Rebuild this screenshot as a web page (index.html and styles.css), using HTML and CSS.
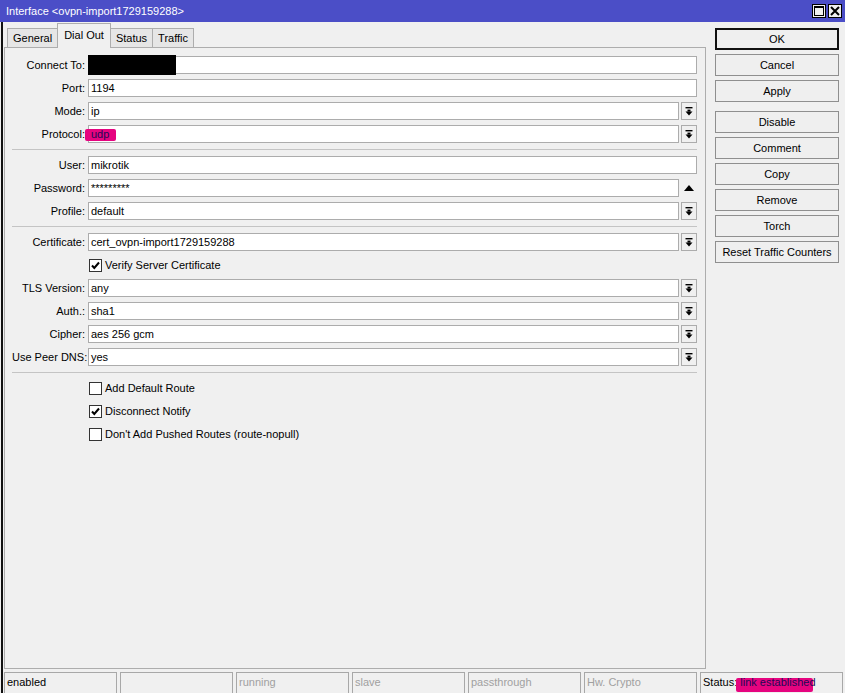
FILE: index.html
```html
<!DOCTYPE html>
<html>
<head>
<meta charset="utf-8">
<title>Interface</title>
<link rel="stylesheet" href="styles.css">
</head>
<body>
<div class="window">
  <div class="titlebar">
    <span class="title">Interface &lt;ovpn-import1729159288&gt;</span>
    <div class="tb-buttons">
      <span class="tb-btn"><svg width="12" height="12" viewBox="0 0 12 12"><rect x="1.5" y="1.5" width="9" height="9" fill="none" stroke="#000" stroke-width="1"/><rect x="1" y="1" width="10" height="2" fill="#000"/></svg></span>
      <span class="tb-btn"><svg width="12" height="12" viewBox="0 0 12 12"><path d="M2 2 L10 10 M10 2 L2 10" stroke="#000" stroke-width="2"/></svg></span>
    </div>
  </div>
  <div class="frame">
    <div class="content">
      <div class="left">
        <div class="tabs">
          <span class="tab">General</span>
          <span class="tab active">Dial Out</span>
          <span class="tab">Status</span>
          <span class="tab">Traffic</span>
        </div>
        <div class="panel">
          <div class="form">
            <div class="row"><label class="lbl">Connect To:</label><div class="field"><span class="input"></span><span class="redact"></span></div></div>
            <div class="row"><label class="lbl">Port:</label><div class="field"><span class="input">1194</span></div></div>
            <div class="row"><label class="lbl">Mode:</label><div class="field"><span class="input">ip</span><span class="dd"><svg width="8" height="9" viewBox="0 0 8 9"><rect x="0.5" y="0" width="7" height="1.4" fill="#000"/><rect x="2.5" y="2.6" width="3" height="2" fill="#000"/><path d="M0.5 4.4 L7.5 4.4 L4 8.4 Z" fill="#000"/></svg></span></div></div>
            <div class="row"><label class="lbl">Protocol:</label><div class="field"><span class="input hl-wrap"><span class="hl hl-udp"></span><span class="hl-text">udp</span></span><span class="dd"><svg width="8" height="9" viewBox="0 0 8 9"><rect x="0.5" y="0" width="7" height="1.4" fill="#000"/><rect x="2.5" y="2.6" width="3" height="2" fill="#000"/><path d="M0.5 4.4 L7.5 4.4 L4 8.4 Z" fill="#000"/></svg></span></div></div>
            <div class="sep"></div>
            <div class="row"><label class="lbl">User:</label><div class="field"><span class="input">mikrotik</span></div></div>
            <div class="row"><label class="lbl">Password:</label><div class="field"><span class="input">*********</span><span class="up"><svg width="10" height="6" viewBox="0 0 10 6"><path d="M0 6 L10 6 L5 0 Z" fill="#000"/></svg></span></div></div>
            <div class="row"><label class="lbl">Profile:</label><div class="field"><span class="input">default</span><span class="dd"><svg width="8" height="9" viewBox="0 0 8 9"><rect x="0.5" y="0" width="7" height="1.4" fill="#000"/><rect x="2.5" y="2.6" width="3" height="2" fill="#000"/><path d="M0.5 4.4 L7.5 4.4 L4 8.4 Z" fill="#000"/></svg></span></div></div>
            <div class="sep"></div>
            <div class="row"><label class="lbl">Certificate:</label><div class="field"><span class="input">cert_ovpn-import1729159288</span><span class="dd"><svg width="8" height="9" viewBox="0 0 8 9"><rect x="0.5" y="0" width="7" height="1.4" fill="#000"/><rect x="2.5" y="2.6" width="3" height="2" fill="#000"/><path d="M0.5 4.4 L7.5 4.4 L4 8.4 Z" fill="#000"/></svg></span></div></div>
            <div class="row"><span class="lbl"></span><div class="check"><span class="box"><svg width="11" height="11" viewBox="0 0 11 11"><path d="M2 5.5 L4.3 8 L9 2.5" fill="none" stroke="#000" stroke-width="2"/></svg></span><span>Verify Server Certificate</span></div></div>
            <div class="row"><label class="lbl">TLS Version:</label><div class="field"><span class="input">any</span><span class="dd"><svg width="8" height="9" viewBox="0 0 8 9"><rect x="0.5" y="0" width="7" height="1.4" fill="#000"/><rect x="2.5" y="2.6" width="3" height="2" fill="#000"/><path d="M0.5 4.4 L7.5 4.4 L4 8.4 Z" fill="#000"/></svg></span></div></div>
            <div class="row"><label class="lbl">Auth.:</label><div class="field"><span class="input">sha1</span><span class="dd"><svg width="8" height="9" viewBox="0 0 8 9"><rect x="0.5" y="0" width="7" height="1.4" fill="#000"/><rect x="2.5" y="2.6" width="3" height="2" fill="#000"/><path d="M0.5 4.4 L7.5 4.4 L4 8.4 Z" fill="#000"/></svg></span></div></div>
            <div class="row"><label class="lbl">Cipher:</label><div class="field"><span class="input">aes 256 gcm</span><span class="dd"><svg width="8" height="9" viewBox="0 0 8 9"><rect x="0.5" y="0" width="7" height="1.4" fill="#000"/><rect x="2.5" y="2.6" width="3" height="2" fill="#000"/><path d="M0.5 4.4 L7.5 4.4 L4 8.4 Z" fill="#000"/></svg></span></div></div>
            <div class="row"><label class="lbl">Use Peer DNS:</label><div class="field"><span class="input">yes</span><span class="dd"><svg width="8" height="9" viewBox="0 0 8 9"><rect x="0.5" y="0" width="7" height="1.4" fill="#000"/><rect x="2.5" y="2.6" width="3" height="2" fill="#000"/><path d="M0.5 4.4 L7.5 4.4 L4 8.4 Z" fill="#000"/></svg></span></div></div>
            <div class="sep"></div>
            <div class="row"><span class="lbl"></span><div class="check"><span class="box"></span><span>Add Default Route</span></div></div>
            <div class="row"><span class="lbl"></span><div class="check"><span class="box"><svg width="11" height="11" viewBox="0 0 11 11"><path d="M2 5.5 L4.3 8 L9 2.5" fill="none" stroke="#000" stroke-width="2"/></svg></span><span>Disconnect Notify</span></div></div>
            <div class="row"><span class="lbl"></span><div class="check"><span class="box"></span><span>Don't Add Pushed Routes (route-nopull)</span></div></div>
          </div>
        </div>
      </div>
      <div class="right">
        <button class="btn default">OK</button>
        <button class="btn">Cancel</button>
        <button class="btn">Apply</button>
        <button class="btn gap">Disable</button>
        <button class="btn">Comment</button>
        <button class="btn">Copy</button>
        <button class="btn">Remove</button>
        <button class="btn">Torch</button>
        <button class="btn">Reset Traffic Counters</button>
      </div>
    </div>
    <div class="statusbar">
      <span class="cell">enabled</span>
      <span class="cell"></span>
      <span class="cell dim">running</span>
      <span class="cell dim">slave</span>
      <span class="cell dim">passthrough</span>
      <span class="cell dim">Hw. Crypto</span>
      <span class="cell last">Status:<span class="hl-wrap st"><span class="hl hl-st"></span><span class="hl-text"> link established</span></span></span>
    </div>
  </div>
</div>
</body>
</html>
```

FILE: styles.css
```css
* { box-sizing: border-box; }
html, body { margin: 0; padding: 0; }
body {
  background: #f0f0f0;
  font-family: "Liberation Sans", Arial, sans-serif;
  font-size: 11px;
  color: #000;
}
.window {
  width: 845px;
  height: 693px;
  overflow: hidden;
  display: flex;
  flex-direction: column;
}
.titlebar {
  height: 22px;
  background: #4b4ec7;
  color: #fff;
  display: flex;
  align-items: center;
  justify-content: space-between;
  padding: 0 3px 0 6px;
  flex: none;
}
.title { font-size: 11px; line-height: 14px; }
.tb-buttons { display: flex; gap: 2px; margin-top: -1px; }
.tb-btn {
  width: 14px;
  height: 14px;
  background: #f0f0f0;
  border: 1px solid #000;
  display: flex;
  align-items: center;
  justify-content: center;
}
.frame {
  flex: 1;
  margin-left: 1px;
  border-left: 2px solid #111;
  display: flex;
  flex-direction: column;
}
.content {
  height: 650px;
  display: flex;
  flex: none;
}
.left {
  width: 702px;
  margin-left: 1px;
  display: flex;
  flex-direction: column;
}
.tabs {
  height: 25px;
  display: flex;
  align-items: flex-end;
  padding-left: 3px;
  position: relative;
  z-index: 1;
}
.tab {
  height: 19px;
  padding: 0 5px;
  line-height: 19px;
  font-size: 11px;
  background: #e6e6e6;
  border: 1px solid #adadad;
  border-bottom: none;
  margin-right: -1px;
}
.tab.active {
  height: 25px;
  line-height: 23px;
  background: #f0f0f0;
  margin-bottom: -1px;
  padding: 0 6px;
  position: relative;
}
.panel {
  height: 622px;
  border: 1px solid #adadad;
  background: #f0f0f0;
  padding: 8px 8px 0 7px;
}
.form {
  display: flex;
  flex-direction: column;
  gap: 5px;
}
.row {
  display: grid;
  grid-template-columns: 73px 1fr;
  column-gap: 3px;
  height: 18px;
}
.lbl {
  text-align: right;
  line-height: 18px;
  white-space: nowrap;
}
.field {
  display: flex;
  gap: 2px;
  height: 18px;
  position: relative;
}
.input {
  flex: 1;
  height: 18px;
  background: #fff;
  border: 1px solid #acacac;
  padding-left: 2px;
  line-height: 16px;
  white-space: nowrap;
}
.dd {
  width: 16px;
  height: 18px;
  border: 1px solid #acacac;
  background: #f0f0f0;
  display: flex;
  align-items: center;
  justify-content: center;
  flex: none;
}
.up {
  width: 16px;
  height: 18px;
  display: flex;
  align-items: center;
  justify-content: center;
  flex: none;
}
.redact {
  position: absolute;
  left: 0;
  top: -1px;
  width: 88px;
  height: 20px;
  background: #000;
}
.hl-wrap { position: relative; }
.hl { position: absolute; background: #e5047f; border-radius: 2px; }
.hl-udp { left: -4px; top: 3px; width: 31px; height: 12px; }
.hl-text { position: relative; color: #1c0a55; }
.sep {
  height: 1px;
  background: #c4c4c4;
  margin: 1px 0 1px 0;
}
.check {
  display: flex;
  align-items: center;
  gap: 3px;
  padding-left: 1px;
  line-height: 18px;
}
.box {
  width: 13px;
  height: 13px;
  background: #fff;
  border: 1px solid #333;
  display: flex;
  align-items: center;
  justify-content: center;
}
.right {
  margin-left: 9px;
  padding-top: 6px;
  display: flex;
  flex-direction: column;
  gap: 4px;
  width: 124px;
}
.btn {
  height: 22px;
  width: 124px;
  background: #efefef;
  border: 1px solid #8f8f8f;
  font-family: "Liberation Sans", Arial, sans-serif;
  font-size: 11px;
  color: #000;
  padding: 0;
  margin: 0;
}
.btn.default { border: 2px solid #111; }
.btn.gap { margin-top: 5px; }
.statusbar {
  height: 21px;
  display: flex;
  gap: 3px;
  padding-left: 1px;
  flex: none;
}
.cell {
  width: 113px;
  height: 24px;
  border: 1px solid #a8a8a8;
  padding-left: 2px;
  line-height: 18px;
  white-space: nowrap;
  flex: none;
}
.cell.dim { color: #a0a0a0; }
.cell.last { width: 143px; }
.st .hl-st { left: -1px; top: 2px; width: 77px; height: 14px; }
```
